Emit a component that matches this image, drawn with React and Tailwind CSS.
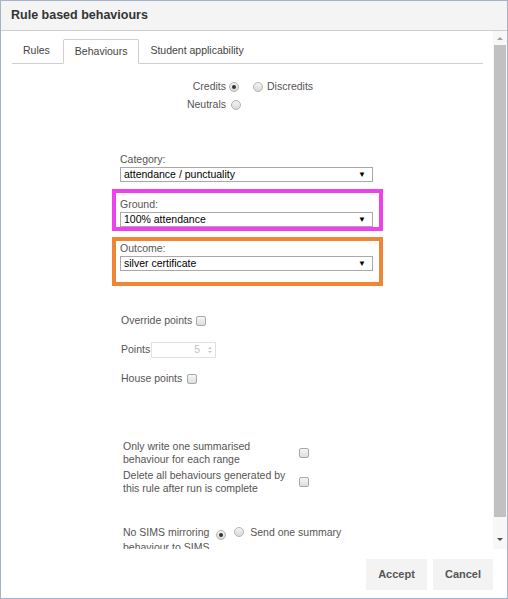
import React from "react";

function Radio({ checked }) {
  return (
    <span className="inline-flex w-[10px] h-[10px] rounded-full border border-[#b3b3b3] bg-gradient-to-b from-[#f4f4f4] to-[#d9d9d9] items-center justify-center align-middle">
      {checked && <span className="w-[4px] h-[4px] rounded-full bg-[#333]" />}
    </span>
  );
}

function Checkbox() {
  return (
    <span className="inline-block w-[10px] h-[10px] rounded-[2px] border border-[#a9a9a9] bg-gradient-to-b from-[#f6f6f6] to-[#dedede] align-middle" />
  );
}

function Select({ value }) {
  return (
    <div className="flex items-center justify-between w-[253px] h-[15px] border border-[#a9a9a9] bg-white pl-[3px] pr-[6px] text-black">
      <span className="leading-[13px]">{value}</span>
      <span className="text-[8px] leading-none">▼</span>
    </div>
  );
}

function Field({ label, value }) {
  return (
    <div>
      <div className="h-[14px] leading-[14px]">{label}</div>
      <div className="mt-[1px]">
        <Select value={value} />
      </div>
    </div>
  );
}

function Tab({ label, active }) {
  if (active) {
    return (
      <div className="h-[25px] px-[11px] flex items-center border border-[#cfcfcf] border-b-white bg-white -mb-px text-[#444] rounded-t-[2px]">
        {label}
      </div>
    );
  }
  return (
    <div className="h-[24px] px-[11px] flex items-center text-[#444]">{label}</div>
  );
}

function Scrollbar() {
  return (
    <div className="w-[14px] flex flex-col items-center bg-[#f7f7f7]">
      <div className="h-[14px] flex items-center justify-center">
        <span className="w-0 h-0 border-l-[3px] border-r-[3px] border-b-[3px] border-l-transparent border-r-transparent border-b-[#a3a3a3]" />
      </div>
      <div className="w-[12px] h-[472px] bg-[#c1c1c1]" />
      <div className="flex-1" />
      <div className="h-[14px] flex items-center justify-center">
        <span className="w-0 h-0 border-l-[3px] border-r-[3px] border-t-[3px] border-l-transparent border-r-transparent border-t-[#505050]" />
      </div>
      <div className="h-[3px]" />
    </div>
  );
}

export default function App() {
  return (
    <div className="w-[508px] h-[599px] border border-[#a2b3cb] bg-white flex flex-col font-['Liberation_Sans',Arial,sans-serif] text-[10.5px] text-[#555]">
      <div className="h-[30px] shrink-0 bg-[#f4f4f4] border-b border-[#cdcdcd] flex items-center pl-[10px] text-[12.5px] font-bold text-[#333]">
        Rule based behaviours
      </div>
      <div className="h-[518px] shrink-0 flex">
        <div className="flex-1 overflow-hidden">
          <div className="mt-[8px] ml-[11px] mr-[10px] flex items-end h-[25px] border-b border-[#cfcfcf]">
            <Tab label="Rules" />
            <div className="w-[2px]" />
            <Tab label="Behaviours" active />
            <Tab label="Student applicability" />
          </div>

          <div className="mt-[15px] flex items-center h-[16px] ml-[185px]">
            <span className="w-[40px] text-right">Credits</span>
            <span className="ml-[3px] flex"><Radio checked /></span>
            <span className="ml-[14px] flex"><Radio /></span>
            <span className="ml-[4px]">Discredits</span>
          </div>
          <div className="mt-[2px] flex items-center h-[16px] ml-[185px]">
            <span className="w-[40px] text-right">Neutrals</span>
            <span className="ml-[5px] flex"><Radio /></span>
          </div>

          <div className="mt-[39px] ml-[111px] w-[271px]">
            <div className="px-[8px]">
              <Field label="Category:" value="attendance / punctuality" />
            </div>
            <div className="mt-[7px] border-4 border-[#ec41ec] px-[4px] pt-[4px]">
              <Field label="Ground:" value="100% attendance" />
            </div>
            <div className="mt-[6px] border-4 border-[#f08535] px-[4px] pb-[11px]">
              <Field label="Outcome:" value="silver certificate" />
            </div>
          </div>

          <div className="ml-[120px]">
            <div className="mt-[28px] h-[14px] flex items-center">
              <span>Override points</span>
              <span className="ml-[4px] flex"><Checkbox /></span>
            </div>
            <div className="mt-[14px] h-[16px] flex items-center">
              <span>Points</span>
              <div className="ml-[1px] w-[65px] h-[16px] border border-[#e2e2e2] flex items-center justify-end pr-[3px] text-[#c4c4c4]">
                <span>5</span>
                <span className="ml-[8px] flex flex-col items-center gap-[2px]">
                  <span className="w-0 h-0 border-l-[2px] border-r-[2px] border-b-[2px] border-l-transparent border-r-transparent border-b-[#c8c8c8]" />
                  <span className="w-0 h-0 border-l-[2px] border-r-[2px] border-t-[2px] border-l-transparent border-r-transparent border-t-[#c8c8c8]" />
                </span>
              </div>
            </div>
            <div className="mt-[14px] h-[14px] flex items-center">
              <span>House points</span>
              <span className="ml-[5px] flex"><Checkbox /></span>
            </div>
          </div>

          <div className="ml-[122px]">
            <div className="mt-[54px] flex items-center">
              <div className="w-[170px] leading-[13px]">Only write one summarised behaviour for each range</div>
              <span className="ml-[6px] flex"><Checkbox /></span>
            </div>
            <div className="mt-[3px] flex items-center">
              <div className="w-[170px] leading-[13px]">Delete all behaviours generated by this rule after run is complete</div>
              <span className="ml-[6px] flex"><Checkbox /></span>
            </div>
            <div className="mt-[30px] w-[240px] leading-[15px]">
              No SIMS mirroring{" "}
              <span className="inline-flex align-[-1px] ml-[4px]"><Radio checked /></span>
              <span className="inline-flex align-[-1px] ml-[8px] mr-[3px]"><Radio /></span>
              {" "}Send one summary behaviour to SIMS
            </div>
          </div>
        </div>
        <Scrollbar />
      </div>
      <div className="flex-1 flex items-start justify-end gap-[6px] pt-[10px] pr-[14px]">
        <button className="w-[61px] h-[31px] bg-[#f3f3f3] font-bold text-[11px] text-[#555]">Accept</button>
        <button className="w-[60px] h-[31px] bg-[#f3f3f3] font-bold text-[11px] text-[#555]">Cancel</button>
      </div>
    </div>
  );
}
